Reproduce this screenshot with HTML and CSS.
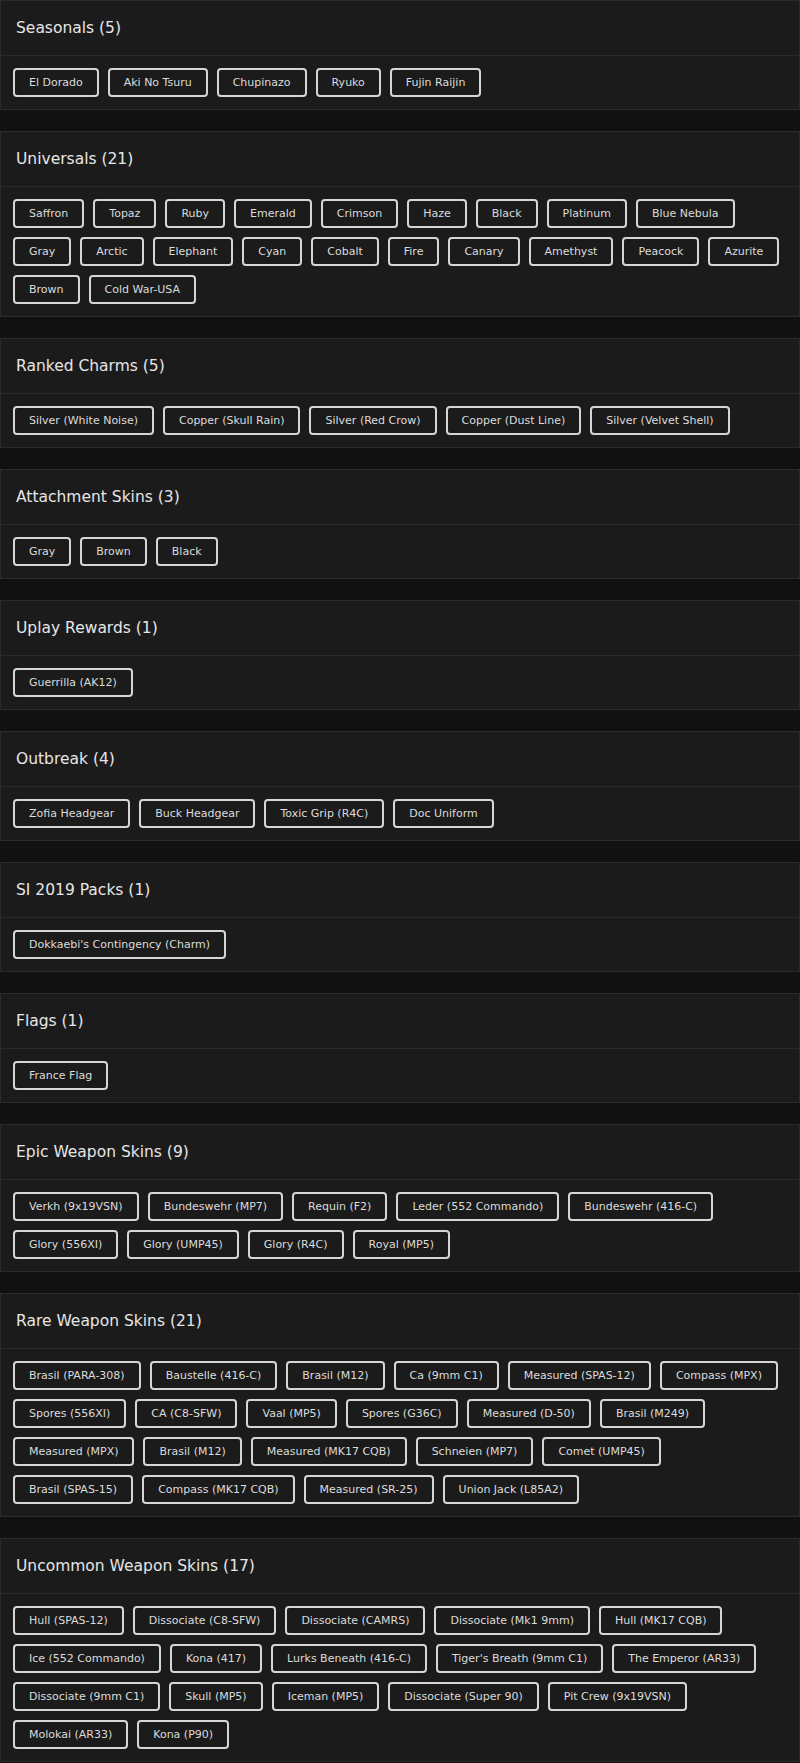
FILE: index.html
```html
<!DOCTYPE html>
<html lang="en">
<head>
    <meta charset="UTF-8">
    <meta name="viewport" content="width=device-width, initial-scale=1.0">
    <title>Inventory</title>
    <link rel="stylesheet" href="styles.css">
</head>
<body>
    <div class="card">
        <div class="card-header">Seasonals (5)</div>
        <div class="card-body">
            <span class="chip">El Dorado</span>
            <span class="chip">Aki No Tsuru</span>
            <span class="chip">Chupinazo</span>
            <span class="chip">Ryuko</span>
            <span class="chip">Fujin Raijin</span>
        </div>
    </div>

    <div class="card">
        <div class="card-header">Universals (21)</div>
        <div class="card-body">
            <span class="chip">Saffron</span>
            <span class="chip">Topaz</span>
            <span class="chip">Ruby</span>
            <span class="chip">Emerald</span>
            <span class="chip">Crimson</span>
            <span class="chip">Haze</span>
            <span class="chip">Black</span>
            <span class="chip">Platinum</span>
            <span class="chip">Blue Nebula</span>
            <span class="chip">Gray</span>
            <span class="chip">Arctic</span>
            <span class="chip">Elephant</span>
            <span class="chip">Cyan</span>
            <span class="chip">Cobalt</span>
            <span class="chip">Fire</span>
            <span class="chip">Canary</span>
            <span class="chip">Amethyst</span>
            <span class="chip">Peacock</span>
            <span class="chip">Azurite</span>
            <span class="chip">Brown</span>
            <span class="chip">Cold War-USA</span>
        </div>
    </div>

    <div class="card">
        <div class="card-header">Ranked Charms (5)</div>
        <div class="card-body">
            <span class="chip">Silver (White Noise)</span>
            <span class="chip">Copper (Skull Rain)</span>
            <span class="chip">Silver (Red Crow)</span>
            <span class="chip">Copper (Dust Line)</span>
            <span class="chip">Silver (Velvet Shell)</span>
        </div>
    </div>

    <div class="card">
        <div class="card-header">Attachment Skins (3)</div>
        <div class="card-body">
            <span class="chip">Gray</span>
            <span class="chip">Brown</span>
            <span class="chip">Black</span>
        </div>
    </div>

    <div class="card">
        <div class="card-header">Uplay Rewards (1)</div>
        <div class="card-body">
            <span class="chip">Guerrilla (AK12)</span>
        </div>
    </div>

    <div class="card">
        <div class="card-header">Outbreak (4)</div>
        <div class="card-body">
            <span class="chip">Zofia Headgear</span>
            <span class="chip">Buck Headgear</span>
            <span class="chip">Toxic Grip (R4C)</span>
            <span class="chip">Doc Uniform</span>
        </div>
    </div>

    <div class="card">
        <div class="card-header">SI 2019 Packs (1)</div>
        <div class="card-body">
            <span class="chip">Dokkaebi's Contingency (Charm)</span>
        </div>
    </div>

    <div class="card">
        <div class="card-header">Flags (1)</div>
        <div class="card-body">
            <span class="chip">France Flag</span>
        </div>
    </div>

    <div class="card">
        <div class="card-header">Epic Weapon Skins (9)</div>
        <div class="card-body">
            <span class="chip">Verkh (9x19VSN)</span>
            <span class="chip">Bundeswehr (MP7)</span>
            <span class="chip">Requin (F2)</span>
            <span class="chip">Leder (552 Commando)</span>
            <span class="chip">Bundeswehr (416-C)</span>
            <span class="chip">Glory (556XI)</span>
            <span class="chip">Glory (UMP45)</span>
            <span class="chip">Glory (R4C)</span>
            <span class="chip">Royal (MP5)</span>
        </div>
    </div>

    <div class="card">
        <div class="card-header">Rare Weapon Skins (21)</div>
        <div class="card-body">
            <span class="chip">Brasil (PARA-308)</span>
            <span class="chip">Baustelle (416-C)</span>
            <span class="chip">Brasil (M12)</span>
            <span class="chip">Ca (9mm C1)</span>
            <span class="chip">Measured (SPAS-12)</span>
            <span class="chip">Compass (MPX)</span>
            <span class="chip">Spores (556XI)</span>
            <span class="chip">CA (C8-SFW)</span>
            <span class="chip">Vaal (MP5)</span>
            <span class="chip">Spores (G36C)</span>
            <span class="chip">Measured (D-50)</span>
            <span class="chip">Brasil (M249)</span>
            <span class="chip">Measured (MPX)</span>
            <span class="chip">Brasil (M12)</span>
            <span class="chip">Measured (MK17 CQB)</span>
            <span class="chip">Schneien (MP7)</span>
            <span class="chip">Comet (UMP45)</span>
            <span class="chip">Brasil (SPAS-15)</span>
            <span class="chip">Compass (MK17 CQB)</span>
            <span class="chip">Measured (SR-25)</span>
            <span class="chip">Union Jack (L85A2)</span>
        </div>
    </div>

    <div class="card">
        <div class="card-header">Uncommon Weapon Skins (17)</div>
        <div class="card-body">
            <span class="chip">Hull (SPAS-12)</span>
            <span class="chip">Dissociate (C8-SFW)</span>
            <span class="chip">Dissociate (CAMRS)</span>
            <span class="chip">Dissociate (Mk1 9mm)</span>
            <span class="chip">Hull (MK17 CQB)</span>
            <span class="chip">Ice (552 Commando)</span>
            <span class="chip">Kona (417)</span>
            <span class="chip">Lurks Beneath (416-C)</span>
            <span class="chip">Tiger's Breath (9mm C1)</span>
            <span class="chip">The Emperor (AR33)</span>
            <span class="chip">Dissociate (9mm C1)</span>
            <span class="chip">Skull (MP5)</span>
            <span class="chip">Iceman (MP5)</span>
            <span class="chip">Dissociate (Super 90)</span>
            <span class="chip">Pit Crew (9x19VSN)</span>
            <span class="chip">Molokai (AR33)</span>
            <span class="chip">Kona (P90)</span>
        </div>
    </div>
</body>
</html>
```

FILE: styles.css
```css
body {
    font-family: "DejaVu Sans", Verdana, sans-serif;
    background-color: #111111;
    color: #e2e2e2;
    margin: 0;
    padding: 0;
}
.card {
    background-color: #1b1b1b;
    border: 1px solid #2b2b2b;
    margin-bottom: 21px;
}
.card:last-child {
    margin-bottom: 0;
}
.card-header {
    padding: 16px 15px;
    font-size: 15.5px;
    line-height: 22px;
    color: #e6e6e6;
    border-bottom: 1px solid #2b2b2b;
}
.card-body {
    display: flex;
    flex-wrap: wrap;
    gap: 9px;
    padding: 12px;
}
.chip {
    display: inline-block;
    padding: 0 14px;
    height: 25px;
    line-height: 25px;
    font-size: 11px;
    color: #dcdcdc;
    border: 2px solid #d6d6d6;
    border-radius: 4px;
    white-space: nowrap;
}
```
